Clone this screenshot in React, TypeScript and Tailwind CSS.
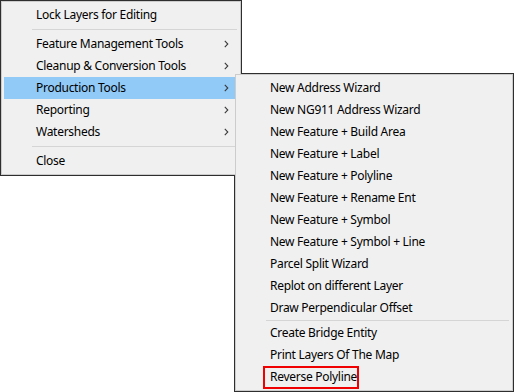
import React from "react";

const font = { fontFamily: '"Noto Sans", "Open Sans", sans-serif' };

function Chevron() {
  return (
    <svg width="5" height="8" viewBox="0 0 5 8" className="absolute right-[9px] top-[7px]">
      <polyline points="0.8,0.8 3.8,4 0.8,7.2" fill="none" stroke="#3a3a3a" strokeWidth="1.1" />
    </svg>
  );
}

function Row({ label, sub, active }: { label: string; sub?: boolean; active?: boolean }) {
  return (
    <div
      className={
        "relative h-[22px] flex items-center pl-[32px] text-[12px] tracking-[-0.28px] text-black leading-none " +
        (active ? "bg-[#91c9f7]" : "")
      }
    >
      <span>{label}</span>
      {sub && <Chevron />}
    </div>
  );
}

function Sep({ h = 7, top = 3 }: { h?: number; top?: number }) {
  return (
    <div className="relative" style={{ height: h }}>
      <div className="absolute left-[28px] right-[1px] h-px bg-[#d5d5d5]" style={{ top }} />
    </div>
  );
}

export default function App() {
  const subItems = [
    "New Address Wizard",
    "New NG911 Address Wizard",
    "New Feature + Build Area",
    "New Feature + Label",
    "New Feature + Polyline",
    "New Feature + Rename Ent",
    "New Feature + Symbol",
    "New Feature + Symbol + Line",
    "Parcel Split Wizard",
    "Replot on different Layer",
    "Draw Perpendicular Offset",
  ];
  return (
    <div className="relative w-[514px] h-[392px] bg-white overflow-hidden" style={font}>
      {/* Main menu */}
      <div className="w-[242px] h-[176px] border border-[#2e2e2e] bg-[#f0f0f0]">
        <div className="h-full border border-[#cccccc] p-[2px]">
          <Row label="Lock Layers for Editing" />
          <Sep />
          <Row label="Feature Management Tools" sub />
          <Row label="Cleanup & Conversion Tools" sub />
          <Row label="Production Tools" sub active />
          <Row label="Reporting" sub />
          <Row label="Watersheds" sub />
          <Sep />
          <Row label="Close" />
        </div>
      </div>

      {/* Submenu */}
      <div className="absolute left-[234px] top-[73px] w-[280px] h-[319px] pl-px pt-px border-r border-b border-[#2e2e2e]">
        <div className="absolute top-0 left-[7px] right-0 h-px bg-[#2e2e2e]" />
        <div className="absolute left-0 top-[102px] bottom-0 w-px bg-[#2e2e2e]" />
        <div className="h-full border border-[#cccccc] bg-[#f0f0f0] p-[2px]">
          {subItems.map((s) => (
            <Row key={s} label={s} />
          ))}
          <Sep h={3} top={1} />
          <Row label="Create Bridge Entity" />
          <Row label="Print Layers Of The Map" />
          <div className="relative">
            <Row label="Reverse Polyline" />
            <div className="absolute left-[25px] top-0 w-[96px] h-[23px] border-2 border-[#f00000]" />
          </div>
        </div>
      </div>
    </div>
  );
}
